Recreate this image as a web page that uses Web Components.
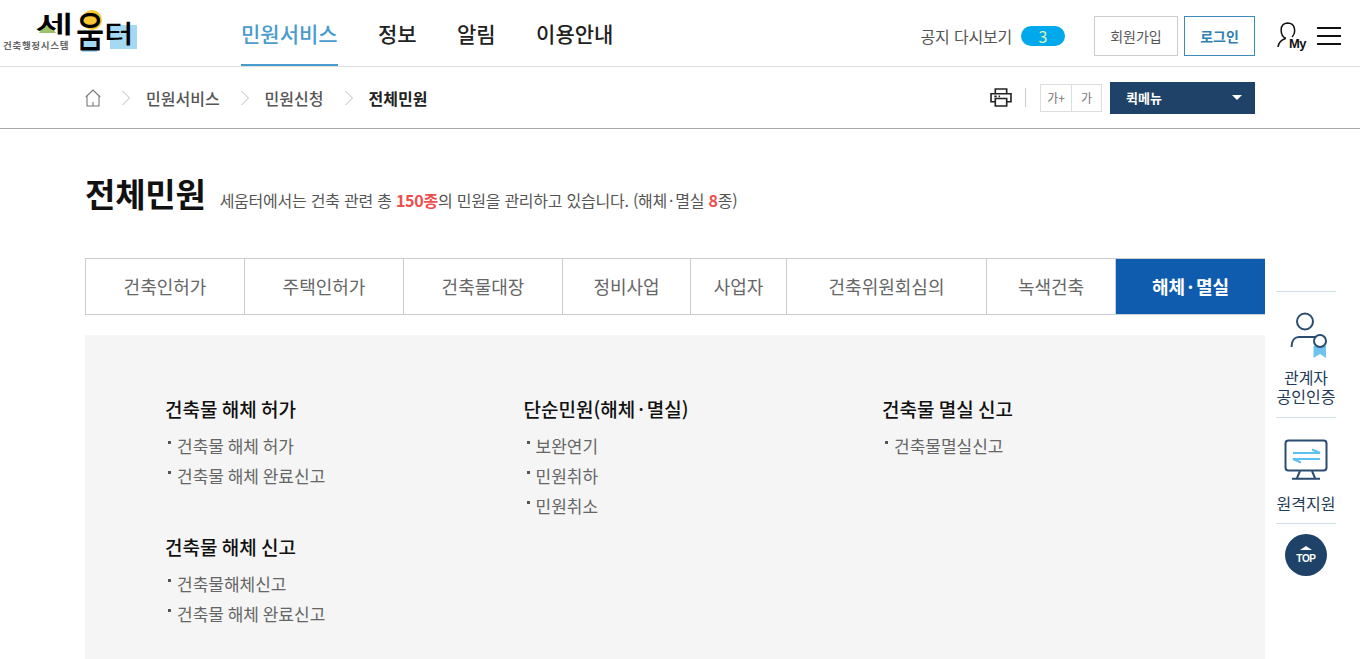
<!DOCTYPE html>
<html lang="ko">
<head>
<meta charset="utf-8">
<title>전체민원</title>
<style>
    html, body { margin: 0; height: 659px; overflow: hidden; background: #fff; }
    body { font-family: "Noto Sans CJK KR", "Noto Sans", sans-serif; color: #333; position: relative; }
    sw-page-title, sw-tabs, sw-panel { margin-left: 85px; width: 1180px; }
</style>
</head>
<body>
<sw-header></sw-header>
<sw-breadcrumb></sw-breadcrumb>
<sw-page-title heading="전체민원">세움터에서는 건축 관련 총 <b>150종</b>의 민원을 관리하고 있습니다. (해체<i>·</i>멸실 <b>8</b>종)</sw-page-title>
<sw-tabs></sw-tabs>
<sw-panel>
    <div slot="col1">
        <sw-group heading="건축물 해체 허가" items="건축물 해체 허가|건축물 해체 완료신고"></sw-group>
        <sw-group heading="건축물 해체 신고" items="건축물해체신고|건축물 해체 완료신고"></sw-group>
    </div>
    <div slot="col2">
        <sw-group heading="단순민원(해체<span>·</span>멸실)" items="보완연기|민원취하|민원취소"></sw-group>
    </div>
    <div slot="col3">
        <sw-group heading="건축물 멸실 신고" items="건축물멸실신고"></sw-group>
    </div>
</sw-panel>
<sw-side-menu></sw-side-menu>

<script>
const NAVY = '#1e4268';

class SwElement extends HTMLElement {
    connectedCallback() {
        if (this.shadowRoot) return;
        this.attachShadow({ mode: 'open' });
        this.shadowRoot.innerHTML = this.render();
    }
}

class SwHeader extends SwElement {
    render() {
        const nav = ['민원서비스', '정보', '알림', '이용안내'];
        return `
        <style>
            :host { display: flex; align-items: stretch; height: 66px; border-bottom: 1px solid #ddd; }
            .logo { position: relative; width: 241px; flex: none; }
            .logo svg { position: absolute; left: 0; top: 0; }
            .logo b { position: absolute; display: block; line-height: 1; font-weight: 500; color: #000; transform-origin: left top; }
            .logo .m1 { left: 35px; top: 11px; font-size: 24px; transform: scale(1.75, 1); }
            .logo .m2 { left: 76px; top: 10px; font-size: 34px; transform: scale(0.9, 1.2); }
            .logo .m3 { left: 104px; top: 20px; font-size: 28px; transform: scale(1.15, 0.9); }
            .logo small { position: absolute; left: 3px; top: 39px; font-size: 9.5px; line-height: 13px; font-weight: 700; color: #666; letter-spacing: 0.7px; white-space: nowrap; }
            nav { display: flex; gap: 40.4px; }
            nav a { font-size: 21px; font-weight: 500; color: #222; line-height: 66px; height: 66px; box-sizing: border-box; white-space: nowrap; }
            nav a.on { color: #4a9cce; border-bottom: 2px solid #4a9cce; }
            .right { margin-left: auto; display: flex; align-items: center; margin-right: 19px; padding-top: 6px; }
            .notice { font-size: 16px; color: #555; letter-spacing: -0.2px; white-space: nowrap; }
            .pill { width: 44px; height: 20px; line-height: 20px; border-radius: 10px; background: #00a9ec; color: #dff5b0; text-align: center; font-size: 16px; margin: 0 29px 0 9px; }
            .btn { height: 40px; line-height: 38px; box-sizing: border-box; border: 1px solid #ccc; text-align: center; font-size: 14px; color: #555; }
            .join { width: 84px; margin-right: 6px; }
            .login { width: 71px; border-color: #3d8bb8; color: #2f7fb5; font-weight: 700; margin-right: 22px; }
            .burger { width: 24px; height: 18px; border-top: 2px solid #111; border-bottom: 2px solid #111; box-sizing: border-box; position: relative; }
            .burger::after { content: ""; position: absolute; left: 0; right: 0; top: 6px; height: 2px; background: #111; }
            .mywrap { position: relative; width: 29px; height: 30px; margin-right: 11px; }
            .mywrap svg { display: block; }
            .mywrap span { position: absolute; left: 12px; top: 14px; font-size: 13px; line-height: 18px; font-weight: 700; color: #111; letter-spacing: -0.5px; font-family: "Liberation Sans", sans-serif; }
        </style>
        <div class="logo">
            <svg width="140" height="60" viewBox="0 0 140 60">
                <polygon points="39,33 47,20 56,33" fill="#9cc36a"/>
                <circle cx="92" cy="20" r="10" fill="#fcc630"/>
                <rect x="82" y="38" width="15" height="14" fill="#a5d8f2"/>
                <rect x="110" y="25" width="27" height="24" fill="#a5d8f2"/>
            </svg>
            <b class="m1">세</b><b class="m2">움</b><b class="m3">터</b>
            <small>건축행정시스템</small>
        </div>
        <nav>${nav.map((n, i) => `<a class="${i === 0 ? 'on' : ''}">${n}</a>`).join('')}</nav>
        <div class="right">
            <span class="notice">공지 다시보기</span>
            <span class="pill">3</span>
            <div class="btn join">회원가입</div>
            <div class="btn login">로그인</div>
            <div class="mywrap">
                <svg width="29" height="30" viewBox="0 0 29 30" fill="none" stroke="#111" stroke-width="1.5">
                    <path d="M9 17.5 C3 15 1.5 2.5 10.5 2 C19 2 19 12 15 16"/>
                    <path d="M8.5 17.5 C4 19 1.5 22 1 26"/>
                </svg>
                <span>My</span>
            </div>
            <div class="burger"></div>
        </div>`;
    }
}

class SwBreadcrumb extends SwElement {
    render() {
        const chevron = `<svg width="10" height="16" viewBox="0 0 10 16" fill="none" stroke="#bbb" stroke-width="1"><path d="M1.5 1 L8.5 8 L1.5 15"/></svg>`;
        return `
        <style>
            :host { display: flex; align-items: center; height: 61px; padding: 0 105px 0 85px; border-bottom: 1px solid #aaa; font-size: 16px; color: #555; font-weight: 500; }
            .crumbs { display: flex; align-items: center; }
            .crumbs svg { display: block; flex: none; }
            .crumbs .home { margin-right: 20px; }
            .crumbs span, strong { white-space: nowrap; }
            .crumbs span { margin: 0 20px 0 15px; }
            strong { color: #222; font-weight: 700; margin-left: 15px; }
            .tools { margin-left: auto; display: flex; align-items: center; }
            .rule { width: 1px; height: 19px; background: #ccc; margin: 0 14px 0 13px; }
            .size { display: flex; border: 1px solid #ddd; height: 28px; box-sizing: border-box; margin-right: 8px; font-size: 12px; font-weight: 400; color: #777; line-height: 26px; text-align: center; }
            .size span { width: 30px; }
            .size span + span { width: 29px; border-left: 1px solid #ddd; }
            .quick { width: 145px; height: 32px; background: ${NAVY}; color: #fff; font-size: 13px; font-weight: 700; line-height: 32px; padding: 0 13px 0 16px; box-sizing: border-box; display: flex; justify-content: space-between; align-items: center; }
            .quick i { width: 0; height: 0; border: 5px solid transparent; border-top: 5px solid #fff; border-bottom: 0; }
        </style>
        <div class="crumbs">
            <svg class="home" width="16" height="18" viewBox="0 0 16 18" fill="none" stroke="#777" stroke-width="1.1"><path d="M0.8 8 L8 1 L15.2 8 M2 7 V17 H14 V7 M8 13 V17"/></svg>
            ${chevron}<span>민원서비스</span>${chevron}<span>민원신청</span>${chevron}<strong>전체민원</strong>
        </div>
        <div class="tools">
            <svg width="22" height="19" viewBox="0 0 23 20" fill="none" stroke="#222" stroke-width="1.7"><path d="M5.5 6 V1 H17.5 V6 M5.5 14.5 H1 V6 H22 V14.5 H17.5 M5.5 11 H17.5 V19 H5.5 Z"/><path d="M4.5 8.8 H7 M9 8.8 H10.5"/></svg>
            <div class="rule"></div>
            <div class="size"><span>가+</span><span>가</span></div>
            <div class="quick">퀵메뉴<i></i></div>
        </div>`;
    }
}

class SwPageTitle extends SwElement {
    render() {
        return `
        <style>
            :host { display: flex; align-items: baseline; height: 129px; box-sizing: border-box; padding-top: 40px; }
            h1 { margin: 0 14px 0 0; font-size: 33px; line-height: 48px; font-weight: 700; color: #111; white-space: nowrap; letter-spacing: -0.2px; }
            p { margin: 0; font-size: 16px; color: #555; letter-spacing: -0.24px; white-space: nowrap; }
            ::slotted(b) { color: #ef4e4e; font-weight: 700; }
            ::slotted(i) { font-style: normal; margin: 0 2px; }
        </style>
        <h1>${this.getAttribute('heading')}</h1>
        <p><slot></slot></p>`;
    }
}

class SwTabs extends SwElement {
    render() {
        const tabs = [['건축인허가', 159], ['주택인허가', 159], ['건축물대장', 159], ['정비사업', 128], ['사업자', 96], ['건축위원회심의', 200], ['녹색건축', 129], ['해체<span>·</span>멸실', 149]];
        return `
        <style>
            :host { display: flex; height: 57px; box-sizing: border-box; border: 1px solid #c8ced4; }
            div { box-sizing: border-box; border-right: 1px solid #ccc; text-align: center; font-size: 18px; line-height: 55px; color: #666; white-space: nowrap; flex: none; }
            div:first-child { width: 158px !important; }
            div.on { background: #0f5bad; color: #fff; font-weight: 700; border: 0; }
            span { margin: 0 2.5px; }
        </style>
        ${tabs.map(([t, w], i) => `<div class="${i === tabs.length - 1 ? 'on' : ''}" style="width:${w}px">${t}</div>`).join('')}`;
    }
}

class SwPanel extends SwElement {
    render() {
        return `
        <style>
            :host { display: grid; grid-template-columns: repeat(3, 358.5px); margin-top: 20px; height: 324px; box-sizing: border-box; padding: 60px 0 0 80px; background: #f5f5f5; }
        </style>
        <slot name="col1"></slot><slot name="col2"></slot><slot name="col3"></slot>`;
    }
}

class SwGroup extends SwElement {
    render() {
        const items = this.getAttribute('items').split('|');
        return `
        <style>
            :host { display: block; margin-bottom: 42px; }
            h3 { margin: 0 0 8px; font-size: 19px; line-height: 28px; font-weight: 500; color: #111; white-space: nowrap; word-spacing: -1px; }
            h3 span { margin: 0 3px; }
            ul { margin: 0; padding: 0; list-style: none; }
            li { position: relative; padding-left: 12px; font-size: 17px; line-height: 30px; color: #666; white-space: nowrap; word-spacing: -1px; }
            li::before { content: ""; position: absolute; left: 3px; top: 10px; width: 3px; height: 3px; background: #555; }
        </style>
        <h3>${this.getAttribute('heading')}</h3>
        <ul>${items.map(i => `<li>${i}</li>`).join('')}</ul>`;
    }
}

class SwSideMenu extends SwElement {
    render() {
        const stroke = '#2a4c70';
        return `
        <style>
            :host { position: absolute; left: 1276px; top: 291px; width: 60px; display: flex; flex-direction: column; align-items: center; border-top: 1px solid #cfe0e6; font-size: 16px; line-height: 19px; color: #1f3b57; text-align: center; }
            .item { width: 60px; border-bottom: 1px solid #cfe0e6; white-space: nowrap; }
            svg { display: block; }
            .a { height: 126px; box-sizing: border-box; padding-top: 19px; }
            .a svg { margin: 0 0 7px 14px; }
            .b { height: 106px; box-sizing: border-box; padding-top: 21px; }
            .b svg { margin: 0 0 14px 8px; }
            .top { width: 42px; height: 42px; border-radius: 50%; background: ${NAVY}; margin-top: 10px; color: #fff; font: 700 10px/10px "Liberation Sans", sans-serif; display: flex; flex-direction: column; align-items: center; justify-content: center; letter-spacing: -0.3px; }
            .top i { width: 0; height: 0; border: 6px solid transparent; border-bottom: 4px solid #fff; border-top: 0; margin-bottom: 4px; }
        </style>
        <div class="item a">
            <svg width="38" height="50" viewBox="0 0 38 50" fill="none">
                <circle cx="15" cy="10.5" r="8" stroke="${stroke}" stroke-width="2"/>
                <path d="M1.5 36 C1.5 29 5 26 9 26 L25 26" stroke="${stroke}" stroke-width="2"/>
                <path d="M23.5 35 H36 V47 L30 43 L23.5 47 Z" fill="#6fc3ee"/>
                <circle cx="30" cy="30" r="6" fill="#fff" stroke="${stroke}" stroke-width="2"/>
            </svg>
            관계자<br>공인인증
        </div>
        <div class="item b">
            <svg width="44" height="41" viewBox="0 0 44 41" fill="none">
                <rect x="1.5" y="1.5" width="41" height="30" rx="3" stroke="${stroke}" stroke-width="2"/>
                <path d="M16 32 L13 39 M28 32 L31 39 M8 39.7 H36" stroke="${stroke}" stroke-width="2"/>
                <path d="M9 14 H36 L28 10.5 M36 20 H9 L17 23.5" stroke="#5cc0f0" stroke-width="2"/>
            </svg>
            원격지원
        </div>
        <div class="top"><i></i>TOP</div>`;
    }
}

customElements.define('sw-header', SwHeader);
customElements.define('sw-breadcrumb', SwBreadcrumb);
customElements.define('sw-page-title', SwPageTitle);
customElements.define('sw-tabs', SwTabs);
customElements.define('sw-panel', SwPanel);
customElements.define('sw-group', SwGroup);
customElements.define('sw-side-menu', SwSideMenu);
</script>
</body>
</html>
